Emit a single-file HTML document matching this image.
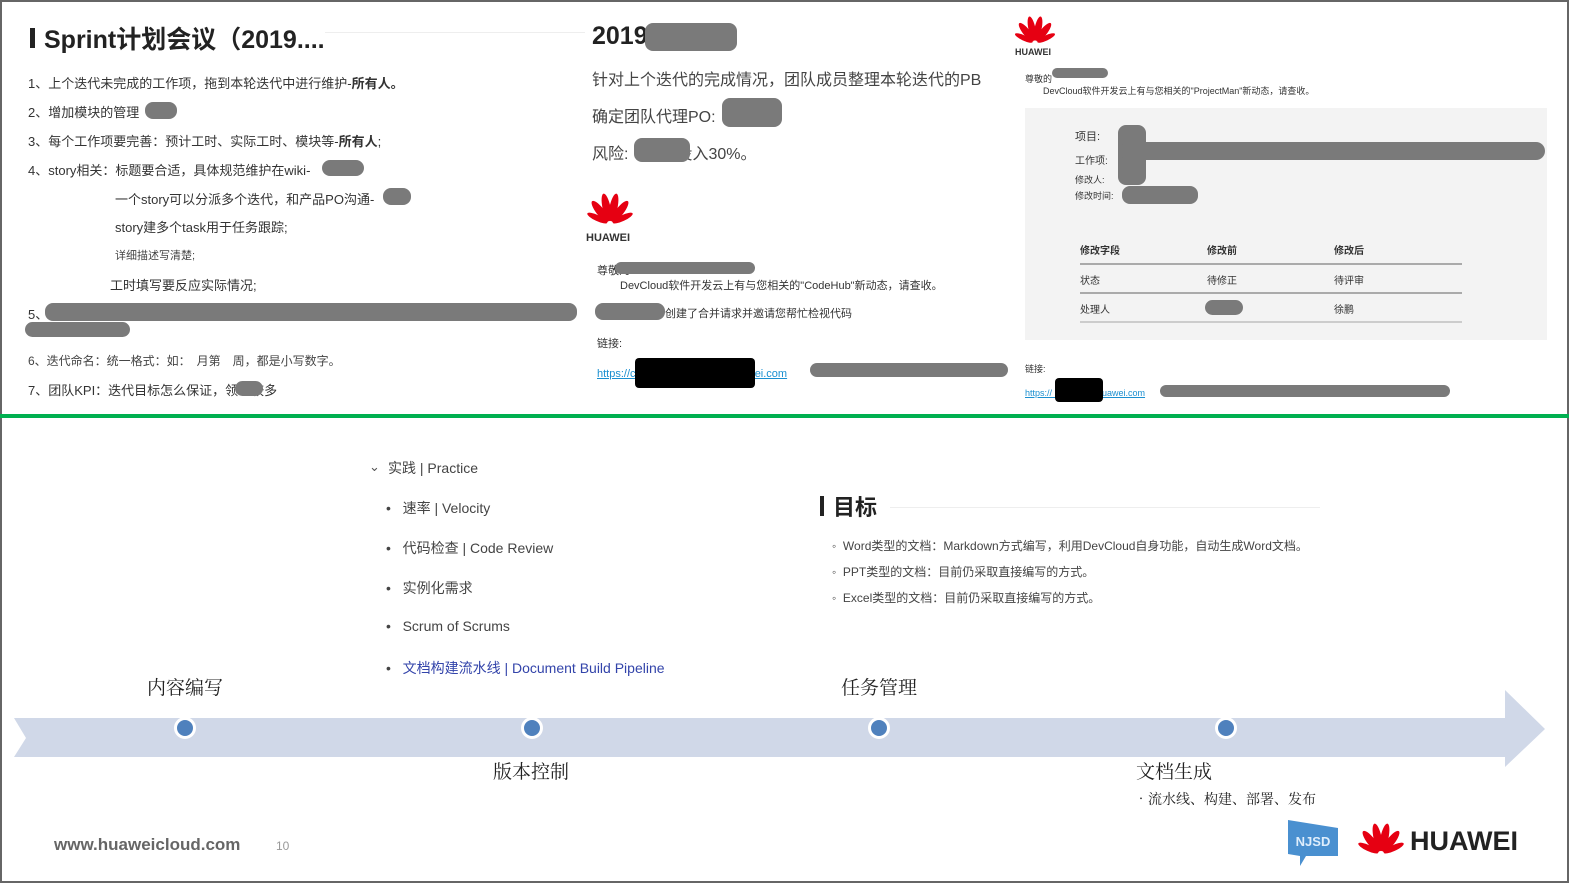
<!DOCTYPE html>
<html><head><meta charset="utf-8"><style>
*{margin:0;padding:0;box-sizing:border-box}
body{width:1587px;height:893px;position:relative;background:#fff;font-family:"Liberation Sans","Noto Sans CJK SC",sans-serif;overflow:hidden}
.frame{position:absolute;left:0;top:0;width:1569px;height:883px;border:2px solid #666;border-right-width:2px}
.a{position:absolute;white-space:nowrap}
.s{color:#333;font-size:13px}
.blob{position:absolute;background:#7a7a7a;border-radius:8px}
.blk{position:absolute;background:#000;border-radius:4px}
.t{font-family:"Noto Serif CJK SC","Liberation Serif",serif;font-size:19px;color:#222}
.li{font-size:14px;color:#444}
.dot{position:absolute;width:22px;height:22px;border-radius:50%;background:#4f81bd;border:3px solid #fff}
</style></head><body>
<div class="frame"></div>
<!-- top left -->
<div class="a" style="left:30px;top:28px;width:5px;height:20px;background:#222"></div>
<div class="a" style="left:44px;top:20px;font-size:25px;font-weight:bold;color:#222">Sprint计划会议（2019....</div>
<div class="a" style="left:325px;top:32px;width:260px;height:1px;background:#eee"></div>
<div class="a s" style="left:28px;top:73px">1、上个迭代未完成的工作项，拖到本轮迭代中进行维护-<b>所有人。</b></div>
<div class="a s" style="left:28px;top:102px">2、增加模块的管理　　;</div><div class="blob" style="left:145px;top:102px;width:32px;height:17px"></div>
<div class="a s" style="left:28px;top:131px">3、每个工作项要完善：预计工时、实际工时、模块等-<b>所有人</b>;</div>
<div class="a s" style="left:28px;top:160px">4、story相关：标题要合适，具体规范维护在wiki-</div><div class="blob" style="left:322px;top:160px;width:42px;height:16px"></div>
<div class="a s" style="left:115px;top:189px">一个story可以分派多个迭代，和产品PO沟通-</div><div class="blob" style="left:383px;top:188px;width:28px;height:17px"></div>
<div class="a s" style="left:115px;top:217px">story建多个task用于任务跟踪;</div>
<div class="a" style="left:115px;top:247px;font-size:11px;color:#444">详细描述写清楚;</div>
<div class="a s" style="left:110px;top:275px">工时填写要反应实际情况;</div>
<div class="a s" style="left:28px;top:304px">5、</div><div class="blob" style="left:45px;top:303px;width:532px;height:18px"></div><div class="blob" style="left:25px;top:322px;width:105px;height:15px"></div>
<div class="a" style="left:28px;top:352px;font-size:12px;color:#444">6、迭代命名：统一格式：如：　月第　周，都是小写数字。</div>
<div class="a s" style="left:28px;top:380px">7、团队KPI：迭代目标怎么保证，领域较多</div><div class="blob" style="left:235px;top:381px;width:28px;height:15px"></div>
<!-- top middle -->
<div class="a" style="left:592px;top:22px;font-size:25px;font-weight:bold;color:#222">2019</div><div class="blob" style="left:645px;top:23px;width:92px;height:28px"></div>
<div class="a" style="left:592px;top:66px;font-size:16px;color:#444">针对上个迭代的完成情况，团队成员整理本轮迭代的PB</div>
<div class="a" style="left:592px;top:103px;font-size:16px;color:#444">确定团队代理PO:</div><div class="blob" style="left:722px;top:98px;width:60px;height:29px"></div>
<div class="a" style="left:592px;top:140px;font-size:16px;color:#444">风险:　　　投入30%。</div><div class="blob" style="left:634px;top:138px;width:56px;height:24px"></div>
<svg class="a" style="left:585px;top:192px" width="50" height="34" viewBox="0 0 50 34"><g fill="#e60012" transform="translate(25,32)"><ellipse cx="0" cy="-17" rx="4" ry="14" transform="rotate(-12)"/><ellipse cx="0" cy="-17" rx="4" ry="14" transform="rotate(12)"/><ellipse cx="0" cy="-16" rx="4" ry="13" transform="rotate(-38)"/><ellipse cx="0" cy="-16" rx="4" ry="13" transform="rotate(38)"/><ellipse cx="0" cy="-14" rx="3" ry="11" transform="rotate(-65)"/><ellipse cx="0" cy="-14" rx="3" ry="11" transform="rotate(65)"/></g></svg>
<div class="a" style="left:586px;top:232px;font-size:11px;font-weight:bold;color:#333">HUAWEI</div>
<div class="a" style="left:597px;top:262px;font-size:11px;color:#333">尊敬的</div><div class="blob" style="left:615px;top:262px;width:140px;height:12px"></div>
<div class="a" style="left:620px;top:277px;font-size:11px;color:#333">DevCloud软件开发云上有与您相关的"CodeHub"新动态，请查收。</div>
<div class="blob" style="left:595px;top:303px;width:70px;height:17px"></div><div class="a" style="left:665px;top:305px;font-size:11px;color:#333">创建了合并请求并邀请您帮忙检视代码</div>
<div class="a" style="left:597px;top:335px;font-size:11px;color:#333">链接:</div>
<div class="a" style="left:597px;top:365px;font-size:11px;color:#1a8fd0;text-decoration:underline">https://c　　　　　　　　　uawei.com</div>
<div class="blk" style="left:635px;top:358px;width:120px;height:30px"></div><div class="blob" style="left:810px;top:363px;width:198px;height:14px"></div>
<!-- top right -->
<svg class="a" style="left:1013px;top:14px" width="44" height="32" viewBox="0 0 50 34"><g fill="#e60012" transform="translate(25,32)"><ellipse cx="0" cy="-17" rx="4" ry="14" transform="rotate(-12)"/><ellipse cx="0" cy="-17" rx="4" ry="14" transform="rotate(12)"/><ellipse cx="0" cy="-16" rx="4" ry="13" transform="rotate(-38)"/><ellipse cx="0" cy="-16" rx="4" ry="13" transform="rotate(38)"/><ellipse cx="0" cy="-14" rx="3" ry="11" transform="rotate(-65)"/><ellipse cx="0" cy="-14" rx="3" ry="11" transform="rotate(65)"/></g></svg>
<div class="a" style="left:1015px;top:47px;font-size:9px;font-weight:bold;color:#333">HUAWEI</div>
<div class="a" style="left:1025px;top:72px;font-size:9px;color:#333">尊敬的</div><div class="blob" style="left:1052px;top:68px;width:56px;height:10px"></div>
<div class="a" style="left:1043px;top:84px;font-size:9px;color:#333">DevCloud软件开发云上有与您相关的"ProjectMan"新动态，请查收。</div>
<div class="a" style="left:1025px;top:108px;width:522px;height:232px;background:#f3f3f3"></div>
<div class="a" style="left:1075px;top:128px;font-size:11px;color:#333">项目:</div>
<div class="a" style="left:1075px;top:152px;font-size:10px;color:#333">工作项:</div>
<div class="a" style="left:1075px;top:173px;font-size:9px;color:#333">修改人:</div>
<div class="a" style="left:1075px;top:189px;font-size:9px;color:#333">修改时间:</div>
<div class="blob" style="left:1118px;top:125px;width:28px;height:60px"></div><div class="blob" style="left:1120px;top:142px;width:425px;height:18px;border-radius:20px"></div><div class="blob" style="left:1122px;top:186px;width:76px;height:18px"></div>
<div class="a" style="left:1080px;top:242px;font-size:10px;font-weight:bold;color:#333">修改字段</div><div class="a" style="left:1207px;top:242px;font-size:10px;font-weight:bold;color:#333">修改前</div><div class="a" style="left:1334px;top:242px;font-size:10px;font-weight:bold;color:#333">修改后</div>
<div class="a" style="left:1080px;top:263px;width:382px;height:2px;background:#aaa"></div>
<div class="a" style="left:1080px;top:272px;font-size:10px;color:#333">状态</div><div class="a" style="left:1207px;top:272px;font-size:10px;color:#333">待修正</div><div class="a" style="left:1334px;top:272px;font-size:10px;color:#333">待评审</div>
<div class="a" style="left:1080px;top:292px;width:382px;height:2px;background:#aaa"></div>
<div class="a" style="left:1080px;top:301px;font-size:10px;color:#333">处理人</div><div class="blob" style="left:1205px;top:300px;width:38px;height:15px"></div><div class="a" style="left:1334px;top:301px;font-size:10px;color:#333">徐鹏</div>
<div class="a" style="left:1080px;top:321px;width:382px;height:2px;background:#ccc"></div>
<div class="a" style="left:1025px;top:362px;font-size:9px;color:#333">链接:</div>
<div class="a" style="left:1025px;top:386px;font-size:9px;color:#1a8fd0;text-decoration:underline">https://　　　　　huawei.com</div>
<div class="blk" style="left:1055px;top:378px;width:48px;height:24px"></div><div class="blob" style="left:1160px;top:385px;width:290px;height:12px"></div>
<!-- green line -->
<div class="a" style="left:0;top:414px;width:1569px;height:4px;background:#00b050"></div>
<!-- middle -->
<div class="a" style="left:369px;top:459px;font-size:13px;color:#555">⌄</div>
<div class="a li" style="left:388px;top:458px">实践 | Practice</div>
<div class="a li" style="left:386px;top:498px">•&nbsp;&nbsp;&nbsp;速率 | Velocity</div>
<div class="a li" style="left:386px;top:538px">•&nbsp;&nbsp;&nbsp;代码检查 | Code Review</div>
<div class="a li" style="left:386px;top:578px">•&nbsp;&nbsp;&nbsp;实例化需求</div>
<div class="a li" style="left:386px;top:618px">•&nbsp;&nbsp;&nbsp;Scrum of Scrums</div>
<div class="a li" style="left:386px;top:658px">•&nbsp;&nbsp;&nbsp;<span style="color:#3344aa">文档构建流水线 | Document Build Pipeline</span></div>
<div class="a" style="left:820px;top:496px;width:4px;height:20px;background:#222"></div>
<div class="a" style="left:833px;top:490px;font-size:22px;font-weight:bold;color:#222">目标</div>
<div class="a" style="left:890px;top:507px;width:430px;height:1px;background:#eee"></div>
<div class="a" style="left:832px;top:537px;font-size:12px;color:#444">◦&nbsp; Word类型的文档：Markdown方式编写，利用DevCloud自身功能，自动生成Word文档。</div>
<div class="a" style="left:832px;top:563px;font-size:12px;color:#444">◦&nbsp; PPT类型的文档：目前仍采取直接编写的方式。</div>
<div class="a" style="left:832px;top:589px;font-size:12px;color:#444">◦&nbsp; Excel类型的文档：目前仍采取直接编写的方式。</div>
<!-- timeline -->
<svg class="a" style="left:0;top:688px" width="1587" height="82"><polygon points="14,30 1505,30 1505,2 1545,41 1505,79 1505,69 14,69 26,50" fill="#d0d8e8"/></svg>
<div class="dot" style="left:174px;top:717px"></div>
<div class="dot" style="left:521px;top:717px"></div>
<div class="dot" style="left:868px;top:717px"></div>
<div class="dot" style="left:1215px;top:717px"></div>
<div class="a t" style="left:147px;top:673px">内容编写</div>
<div class="a t" style="left:841px;top:673px">任务管理</div>
<div class="a t" style="left:493px;top:757px">版本控制</div>
<div class="a t" style="left:1136px;top:757px">文档生成</div>
<div class="a t" style="left:1134px;top:789px;font-size:14px">•流水线、构建、部署、发布</div>
<!-- footer -->
<div class="a" style="left:54px;top:835px;font-size:17px;color:#666;font-weight:bold">www.huaweicloud.com</div>
<div class="a" style="left:276px;top:839px;font-size:12px;color:#999">10</div>
<svg class="a" style="left:1286px;top:820px" width="54" height="46"><polygon points="2,0 52,8 52,36 20,36 14,46 14,36 2,34" fill="#4a90d0"/><text x="27" y="26" font-family="Liberation Sans" font-size="13" font-weight="bold" fill="#dfeefc" text-anchor="middle">NJSD</text></svg>
<svg class="a" style="left:1356px;top:820px" width="50" height="38" viewBox="0 0 50 34"><g fill="#e60012" transform="translate(25,32)"><ellipse cx="0" cy="-17" rx="4" ry="14" transform="rotate(-12)"/><ellipse cx="0" cy="-17" rx="4" ry="14" transform="rotate(12)"/><ellipse cx="0" cy="-16" rx="4" ry="13" transform="rotate(-38)"/><ellipse cx="0" cy="-16" rx="4" ry="13" transform="rotate(38)"/><ellipse cx="0" cy="-14" rx="3" ry="11" transform="rotate(-65)"/><ellipse cx="0" cy="-14" rx="3" ry="11" transform="rotate(65)"/></g></svg>
<div class="a" style="left:1410px;top:826px;font-size:27px;font-weight:bold;color:#222">HUAWEI</div>
</body></html>
